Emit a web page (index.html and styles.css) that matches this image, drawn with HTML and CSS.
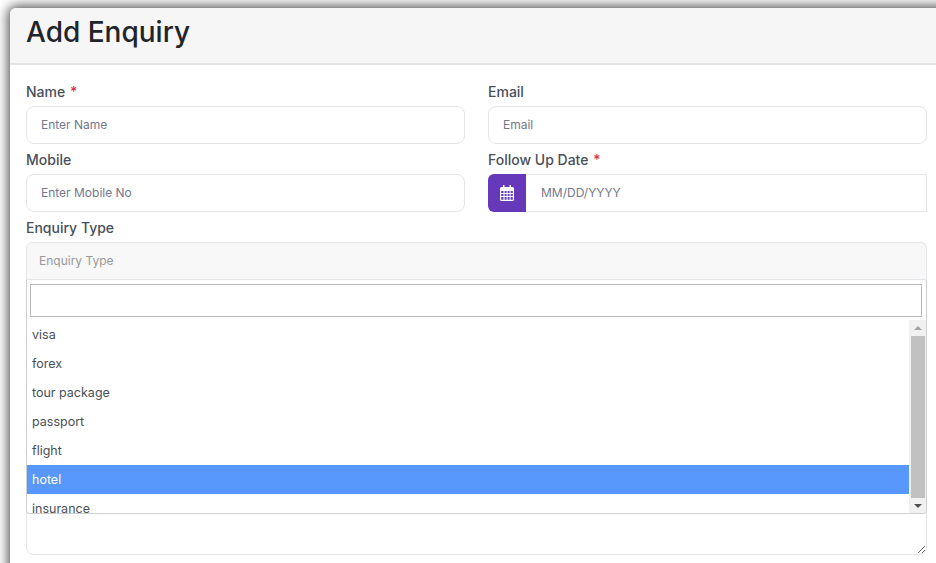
FILE: index.html
```html
<!DOCTYPE html>
<html lang="en">
<head>
<meta charset="utf-8">
<title>Add Enquiry</title>
<link rel="stylesheet" href="styles.css">
</head>
<body>
<div class="page">
<main class="card">
  <header class="card-header"><h1>Add Enquiry</h1></header>
  <form class="card-body">
    <div class="grid">
      <div class="field">
        <label class="label">Name <span class="req">*</span></label>
        <input class="input" type="text" placeholder="Enter Name">
      </div>
      <div class="field">
        <label class="label">Email</label>
        <input class="input" type="text" placeholder="Email">
      </div>
      <div class="field">
        <label class="label">Mobile</label>
        <input class="input" type="text" placeholder="Enter Mobile No">
      </div>
      <div class="field">
        <label class="label">Follow Up Date <span class="req">*</span></label>
        <div class="date-group">
          <span class="date-icon">
            <svg width="14" height="16" viewBox="0 0 14 16" aria-hidden="true">
              <path fill="#fff" fill-rule="evenodd" d="M3 0h1.500v2h5V0H11v2h1.500A1.500 1.500 0 0 1 14 3.500v11a1.500 1.500 0 0 1-1.500 1.500h-11A1.500 1.500 0 0 1 0 14.500v-11A1.500 1.500 0 0 1 1.500 2H3V0zM1.200 6v2h2.300V6H1.200zm3.400 0v2h2V6h-2zm3 0v2h2V6h-2zm3 0v2h2.200V6h-2.200zM1.200 9v2h2.300V9H1.200zm3.400 0v2h2V9h-2zm3 0v2h2V9h-2zm3 0v2h2.200V9h-2.200zM1.200 12v2.800h2.300V12H1.200zm3.400 0v2.800h2V12h-2zm3 0v2.800h2V12h-2zm3 0v2.800h2.200V12h-2.200z"/>
            </svg>
          </span>
          <input class="date-input" type="text" placeholder="MM/DD/YYYY">
        </div>
      </div>
    </div>
    <div class="field select-field">
      <label class="label">Enquiry Type</label>
      <div class="select-box">Enquiry Type</div>
      <div class="dropdown">
        <div class="search-wrap"><input class="search" type="text"></div>
        <div class="list-wrap">
          <ul class="list">
            <li>visa</li>
            <li>forex</li>
            <li>tour package</li>
            <li>passport</li>
            <li>flight</li>
            <li class="active">hotel</li>
            <li>insurance</li>
          </ul>
          <div class="scrollbar">
            <span class="arrow up"></span>
            <span class="thumb"></span>
            <span class="arrow down"></span>
          </div>
        </div>
      </div>
    </div>
    <textarea class="textarea"></textarea>
  </form>
</main>
</div>
</body>
</html>
```
FILE: styles.css
```css
* { box-sizing: border-box; }
body {
  margin: 0;
  background: #fff;
  font-family: Inter, "Noto Sans", sans-serif;
  color: #495057;
}
.page {
  height: 563px;
  padding: 8px 0 0 10px;
  overflow: hidden;
}
.card {
  width: 940px;
  height: 600px;
  background: #fff;
  border-radius: 6px 0 0 0;
  box-shadow: 0 0 12px 2px rgba(0, 0, 0, .7);
}
.card-header {
  height: 57px;
  padding: 0 16px;
  display: flex;
  align-items: center;
  background: #f6f6f6;
  border-bottom: 2px solid #e4e4e4;
  border-radius: 6px 0 0 0;
}
h1 {
  margin: 0 0 7px;
  font-size: 28px;
  font-weight: 500;
  color: #212529;
}
.card-body { padding: 16px 13px 0 16px; }
.grid {
  display: grid;
  grid-template-columns: 439px 439px;
  column-gap: 23px;
}
.field { margin-bottom: 5px; }
.label {
  display: block;
  height: 25px;
  padding-top: 2px;
  font-size: 14px;
  line-height: 17px;
  font-weight: 500;
}
.req { color: #d9304f; margin-left: 1px; }
.input {
  display: block;
  width: 100%;
  height: 38px;
  padding: 0 14px 2px;
  border: 1px solid #e6e6ea;
  border-radius: 8px;
  background: #fff;
  font: 12px Inter, sans-serif;
  outline: none;
}
::placeholder { color: #74788d; opacity: 1; }
.date-group { display: flex; height: 38px; }
.date-icon {
  width: 38px;
  flex: none;
  display: flex;
  align-items: center;
  justify-content: center;
  background: #6539b9;
  border-radius: 6px 0 0 6px;
}
.date-input {
  flex: 1;
  min-width: 0;
  padding: 0 15px 2px;
  border: 1px solid #e6e6ea;
  border-left: 0;
  font: 12px Inter, sans-serif;
  outline: none;
}
.select-field { position: relative; margin-bottom: 30px; width: 901px; }
.select-box {
  height: 38px;
  padding: 0 12px 2px;
  display: flex;
  align-items: center;
  border: 1px solid #e6e6ea;
  border-radius: 6px 6px 0 0;
  background: #f8f8f8;
  color: #999;
  font-size: 12px;
}
.dropdown {
  position: absolute;
  left: 0;
  right: 0;
  top: 63px;
  height: 234px;
  background: #fff;
  border: 1px solid #cfcfcf;
  border-top: 0;
  border-radius: 0 0 4px 4px;
  overflow: hidden;
  z-index: 2;
}
.search-wrap { padding: 4px 4px 3px 3px; }
.search {
  display: block;
  width: 100%;
  height: 33px;
  border: 1px solid #b9b9b9;
  outline: none;
}
.list-wrap { display: flex; height: 194px; }
.list {
  flex: 1;
  margin: 0;
  padding: 0;
  list-style: none;
  overflow: hidden;
  font-size: 12.5px;
}
.list li {
  height: 29px;
  padding: 0 5px;
  line-height: 29px;
  color: #495057;
}
.list .active { background: #5897fb; color: #fff; }
.scrollbar {
  width: 17px;
  flex: none;
  display: flex;
  flex-direction: column;
  align-items: center;
  background: #f1f1f1;
}
.arrow {
  height: 16px;
  width: 16px;
  flex: none;
  display: flex;
  align-items: center;
  justify-content: center;
}
.arrow::before {
  content: "";
  border-left: 4px solid transparent;
  border-right: 4px solid transparent;
}
.up::before { border-bottom: 4px solid #a3a3a3; }
.down::before { border-top: 4px solid #505050; }
.thumb { flex: 1; width: 14px; background: #c1c1c1; }
.textarea {
  display: block;
  width: 901px;
  height: 245px;
  border: 1px solid #e6e6ea;
  border-radius: 8px;
  outline: none;
  resize: both;
}
```
